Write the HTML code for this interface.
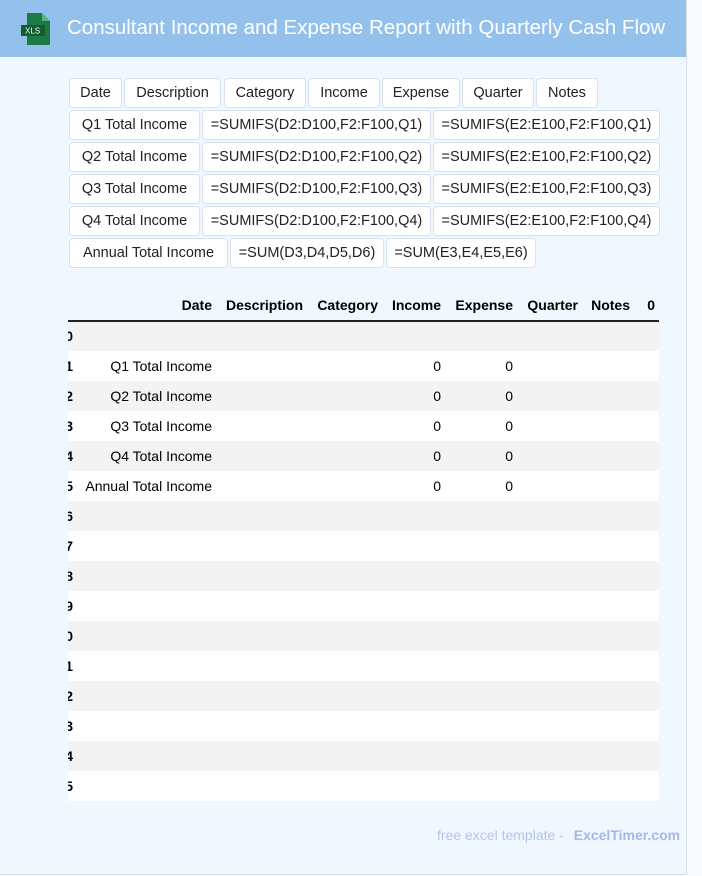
<!DOCTYPE html>
<html><head><style>
*{margin:0;padding:0;box-sizing:border-box}
body{width:702px;height:876px;background:#f7f9fc;font-family:"Liberation Sans",Arial,sans-serif;position:relative;overflow:hidden}
#wrap{position:absolute;left:0;top:0;width:687px;height:875px;background:#f0f7ff;border-right:1px solid #d8dfe8;border-bottom:1px solid #d8dfe8}
#hdr{position:absolute;left:0;top:0;width:686px;height:57px;background:#93c1ec}
#hdr h1{position:absolute;left:67px;top:16px;font-size:20.5px;font-weight:normal;color:#fff;white-space:nowrap}
.b{position:absolute;height:30px;background:#fff;border:1px solid #d6e2ef;border-radius:4px;font-size:14.5px;color:#222;line-height:28px;text-align:center;white-space:nowrap}
table{position:absolute;left:68px;top:290px;width:591px;border-collapse:collapse;font-size:14px;table-layout:fixed}
td,th{height:30px;padding:0 4px;text-align:right;white-space:nowrap;overflow:visible}
th{font-weight:bold;border-bottom:2px solid #222;height:31px}
tr:nth-child(even) td{background:#f3f3f3}
tr:nth-child(odd) td{background:#fff}
#idx{position:absolute;left:68px;top:321px;width:5px;height:480px;overflow:hidden}
.i{position:absolute;right:0;font-weight:bold;font-size:14px;height:30px;line-height:30px}
#ft{position:absolute;left:437px;top:827px;font-size:14px;color:#b4c4ec}
#ft b{color:#a4b8ea;margin-left:6px}
</style></head><body><div id="wrap">
<div id="hdr">
<svg style="position:absolute;left:20px;top:12px" width="32" height="34" viewBox="0 0 32 34"><path d="M7 1h15l8 8v24H7z" fill="#1e7a45"/><path d="M22 1v8h8z" fill="#5fb07f"/><rect x="1" y="13" width="24" height="11" fill="#145c32"/><text x="5" y="21.5" font-family="Liberation Sans" font-size="8" fill="#fff">XLS</text></svg>
<h1>Consultant Income and Expense Report with Quarterly Cash Flow</h1>
</div>
<div class="b" style="left:69px;top:78px;width:53px">Date</div>
<div class="b" style="left:124px;top:78px;width:97px">Description</div>
<div class="b" style="left:224px;top:78px;width:82px">Category</div>
<div class="b" style="left:308px;top:78px;width:72px">Income</div>
<div class="b" style="left:382px;top:78px;width:78px">Expense</div>
<div class="b" style="left:462px;top:78px;width:72px">Quarter</div>
<div class="b" style="left:536px;top:78px;width:62px">Notes</div>

<div class="b" style="left:69px;top:110px;width:131px">Q1 Total Income</div>
<div class="b" style="left:202px;top:110px;width:229px">=SUMIFS(D2:D100,F2:F100,Q1)</div>
<div class="b" style="left:433px;top:110px;width:227px">=SUMIFS(E2:E100,F2:F100,Q1)</div>
<div class="b" style="left:69px;top:142px;width:131px">Q2 Total Income</div>
<div class="b" style="left:202px;top:142px;width:229px">=SUMIFS(D2:D100,F2:F100,Q2)</div>
<div class="b" style="left:433px;top:142px;width:227px">=SUMIFS(E2:E100,F2:F100,Q2)</div>
<div class="b" style="left:69px;top:174px;width:131px">Q3 Total Income</div>
<div class="b" style="left:202px;top:174px;width:229px">=SUMIFS(D2:D100,F2:F100,Q3)</div>
<div class="b" style="left:433px;top:174px;width:227px">=SUMIFS(E2:E100,F2:F100,Q3)</div>
<div class="b" style="left:69px;top:206px;width:131px">Q4 Total Income</div>
<div class="b" style="left:202px;top:206px;width:229px">=SUMIFS(D2:D100,F2:F100,Q4)</div>
<div class="b" style="left:433px;top:206px;width:227px">=SUMIFS(E2:E100,F2:F100,Q4)</div>
<div class="b" style="left:69px;top:238px;width:159px">Annual Total Income</div>
<div class="b" style="left:230px;top:238px;width:154px">=SUM(D3,D4,D5,D6)</div>
<div class="b" style="left:386px;top:238px;width:150px">=SUM(E3,E4,E5,E6)</div>

<table>
<colgroup><col style="width:148px"><col style="width:91px"><col style="width:75px"><col style="width:63px"><col style="width:72px"><col style="width:65px"><col style="width:52px"><col style="width:25px"></colgroup>
<tr><th>Date</th><th>Description</th><th>Category</th><th>Income</th><th>Expense</th><th>Quarter</th><th>Notes</th><th>0</th></tr>
<tr><td></td><td></td><td></td><td></td><td></td><td></td><td></td><td></td></tr>
<tr><td>Q1 Total Income</td><td></td><td></td><td>0</td><td>0</td><td></td><td></td><td></td></tr>
<tr><td>Q2 Total Income</td><td></td><td></td><td>0</td><td>0</td><td></td><td></td><td></td></tr>
<tr><td>Q3 Total Income</td><td></td><td></td><td>0</td><td>0</td><td></td><td></td><td></td></tr>
<tr><td>Q4 Total Income</td><td></td><td></td><td>0</td><td>0</td><td></td><td></td><td></td></tr>
<tr><td>Annual Total Income</td><td></td><td></td><td>0</td><td>0</td><td></td><td></td><td></td></tr>
<tr><td></td><td></td><td></td><td></td><td></td><td></td><td></td><td></td></tr>
<tr><td></td><td></td><td></td><td></td><td></td><td></td><td></td><td></td></tr>
<tr><td></td><td></td><td></td><td></td><td></td><td></td><td></td><td></td></tr>
<tr><td></td><td></td><td></td><td></td><td></td><td></td><td></td><td></td></tr>
<tr><td></td><td></td><td></td><td></td><td></td><td></td><td></td><td></td></tr>
<tr><td></td><td></td><td></td><td></td><td></td><td></td><td></td><td></td></tr>
<tr><td></td><td></td><td></td><td></td><td></td><td></td><td></td><td></td></tr>
<tr><td></td><td></td><td></td><td></td><td></td><td></td><td></td><td></td></tr>
<tr><td></td><td></td><td></td><td></td><td></td><td></td><td></td><td></td></tr>
<tr><td></td><td></td><td></td><td></td><td></td><td></td><td></td><td></td></tr>
</table>
<div id="idx">
<div class="i" style="top:0">0</div><div class="i" style="top:30px">1</div><div class="i" style="top:60px">2</div><div class="i" style="top:90px">3</div><div class="i" style="top:120px">4</div><div class="i" style="top:150px">5</div><div class="i" style="top:180px">6</div><div class="i" style="top:210px">7</div><div class="i" style="top:240px">8</div><div class="i" style="top:270px">9</div><div class="i" style="top:300px">0</div><div class="i" style="top:330px">1</div><div class="i" style="top:360px">2</div><div class="i" style="top:390px">3</div><div class="i" style="top:420px">4</div><div class="i" style="top:450px">5</div>
</div>
<div id="ft">free excel template - <b>ExcelTimer.com</b></div>
</div></body></html>
